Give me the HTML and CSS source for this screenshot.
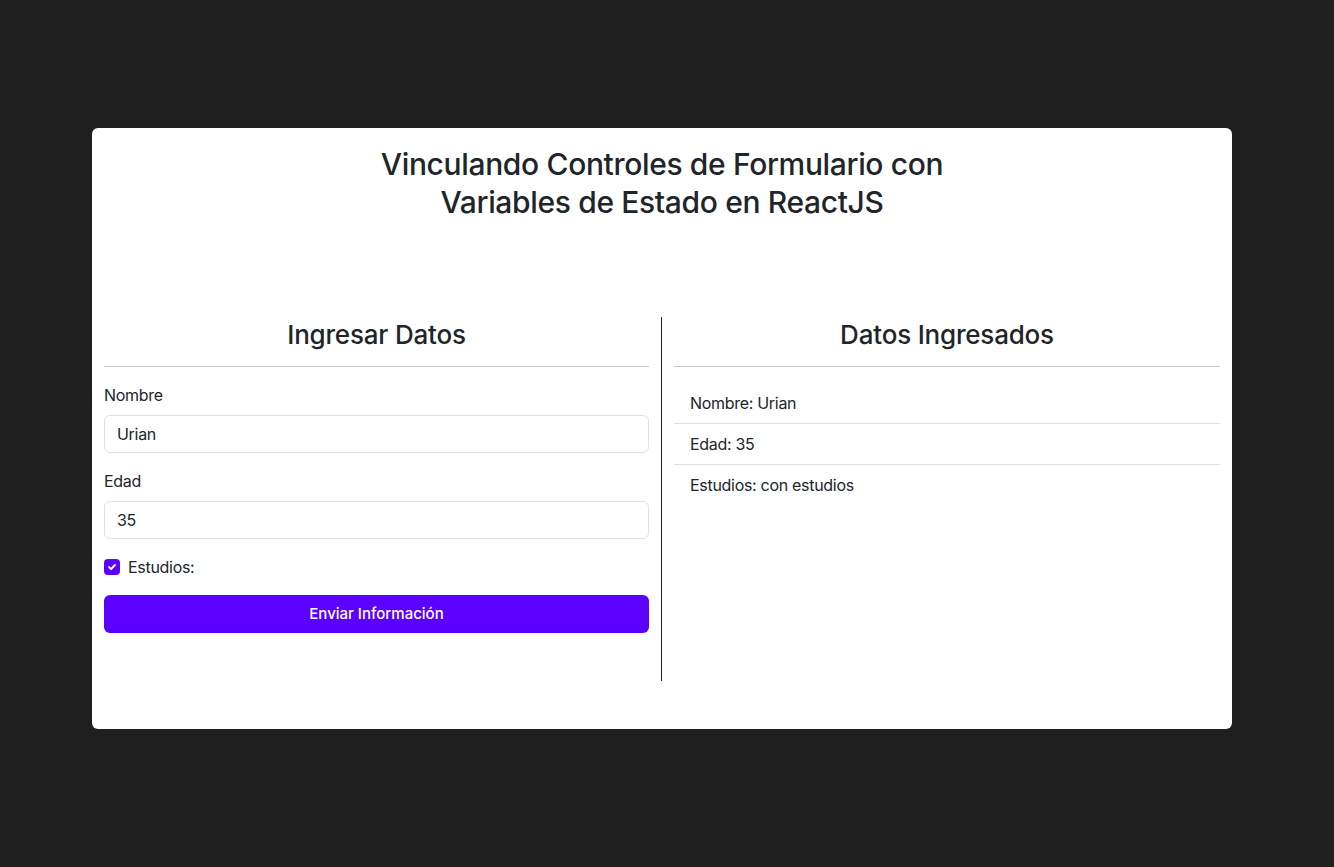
FILE: index.html
```html
<!DOCTYPE html>
<html lang="es">
<head>
<meta charset="utf-8">
<title>Formulario ReactJS</title>
<link rel="stylesheet" href="styles.css">
</head>
<body>
<main class="card">
  <h1 class="title">Vinculando Controles de Formulario con<br>Variables de Estado en ReactJS</h1>
  <div class="row">
    <section class="col col-left">
      <h2 class="col-title">Ingresar Datos</h2>
      <hr class="sep">
      <form class="form">
        <label class="label" for="nombre">Nombre</label>
        <input class="input" id="nombre" type="text" value="Urian">
        <label class="label" for="edad">Edad</label>
        <input class="input" id="edad" type="text" value="35">
        <div class="check-row">
          <span class="check">
            <svg width="10" height="10" viewBox="0 0 10 10"><path d="M2.1 5.1 L4.1 7.1 L7.9 3.0" fill="none" stroke="#fff" stroke-width="2" stroke-linecap="round" stroke-linejoin="round"/></svg>
          </span>
          <span class="check-label">Estudios:</span>
        </div>
        <button class="btn" type="button">Enviar Información</button>
      </form>
    </section>
    <section class="col col-right">
      <h2 class="col-title">Datos Ingresados</h2>
      <hr class="sep">
      <ul class="list">
        <li class="item">Nombre: Urian</li>
        <li class="item">Edad: 35</li>
        <li class="item">Estudios: con estudios</li>
      </ul>
    </section>
  </div>
</main>
</body>
</html>
```
FILE: styles.css
```css
* { box-sizing: border-box; }
html, body { margin: 0; padding: 0; }
body {
  background: #1f1f1f;
  font-family: Inter, "Liberation Sans", sans-serif;
  color: #212529;
  font-size: 16px;
  line-height: 24px;
  letter-spacing: -0.3px;
  padding-top: 128px;
}
.card {
  width: 1140px;
  margin: 0 0 0 92px;
  background: #fff;
  border-radius: 6px;
  padding: 17px 12px 48px;
}
.title {
  margin: 0;
  font-size: 30px;
  line-height: 38px;
  font-weight: 500;
  text-align: center;
  letter-spacing: -0.35px;
}
.row {
  display: flex;
  margin: 96px -12px 0;
}
.col {
  flex: 0 0 50%;
  padding: 0 12px 48px;
}
.col-left { border-right: 1px solid #212529; }
.col-title {
  margin: 0;
  font-size: 26px;
  line-height: 36px;
  font-weight: 500;
  text-align: center;
  letter-spacing: -0.2px;
}
.sep {
  margin: 13px 0 16px;
  border: 0;
  border-top: 1px solid #c8c9cb;
}
.form { display: flex; flex-direction: column; }
.label { display: block; margin-bottom: 8px; }
.input {
  display: block;
  width: 100%;
  height: 38px;
  padding: 6px 12px;
  border: 1px solid #dee2e6;
  border-radius: 6px;
  font: inherit;
  letter-spacing: -0.3px;
  color: #212529;
  margin-bottom: 16px;
}
.check-row {
  display: flex;
  align-items: center;
  gap: 8px;
  margin-bottom: 16px;
}
.check {
  width: 16px;
  height: 16px;
  border-radius: 4px;
  background: #5b00ff;
  display: flex;
  align-items: center;
  justify-content: center;
}
.btn {
  height: 38px;
  border: 0;
  border-radius: 6px;
  background: #5b00ff;
  color: #fff;
  font: inherit;
  font-weight: 500;
  font-size: 15px;
  letter-spacing: 0;
}
.list { list-style: none; margin: 0; padding: 0; }
.item {
  padding: 8px 16px;
  border-bottom: 1px solid #dee2e6;
}
.item:last-child { border-bottom: 0; }
```
